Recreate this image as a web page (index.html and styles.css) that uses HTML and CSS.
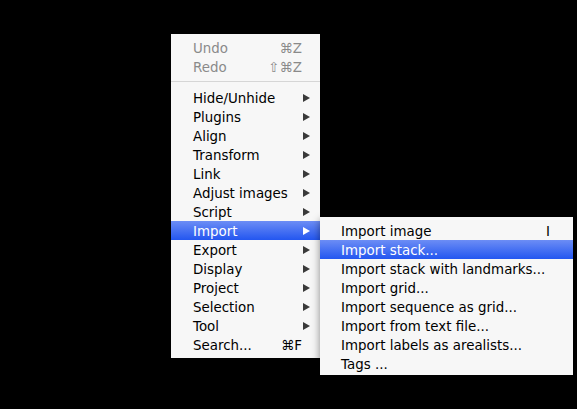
FILE: index.html
```html
<!DOCTYPE html>
<html lang="en">
<head>
  <meta charset="UTF-8" />
  <title>Menu</title>
  <link rel="stylesheet" href="styles.css">
</head>
<body>
  <div class="stage">
    <ul class="menu main">
      <li class="item off"><span class="label">Undo</span><span class="key">⌘Z</span></li>
      <li class="item off"><span class="label">Redo</span><span class="key">⇧⌘Z</span></li>
      <li class="sep"></li>
      <li class="item"><span class="label">Hide/Unhide</span><span class="arrow"></span></li>
      <li class="item"><span class="label">Plugins</span><span class="arrow"></span></li>
      <li class="item"><span class="label">Align</span><span class="arrow"></span></li>
      <li class="item"><span class="label">Transform</span><span class="arrow"></span></li>
      <li class="item"><span class="label">Link</span><span class="arrow"></span></li>
      <li class="item"><span class="label">Adjust images</span><span class="arrow"></span></li>
      <li class="item"><span class="label">Script</span><span class="arrow"></span></li>
      <li class="item active open"><span class="label">Import</span><span class="arrow"></span>
        <ul class="menu sub">
          <li class="item"><span class="label">Import image</span><span class="key">I</span></li>
          <li class="item active"><span class="label">Import stack...</span></li>
          <li class="item"><span class="label">Import stack with landmarks...</span></li>
          <li class="item"><span class="label">Import grid...</span></li>
          <li class="item"><span class="label">Import sequence as grid...</span></li>
          <li class="item"><span class="label">Import from text file...</span></li>
          <li class="item"><span class="label">Import labels as arealists...</span></li>
          <li class="item"><span class="label">Tags ...</span></li>
        </ul>
      </li>
      <li class="item"><span class="label">Export</span><span class="arrow"></span></li>
      <li class="item"><span class="label">Display</span><span class="arrow"></span></li>
      <li class="item"><span class="label">Project</span><span class="arrow"></span></li>
      <li class="item"><span class="label">Selection</span><span class="arrow"></span></li>
      <li class="item"><span class="label">Tool</span><span class="arrow"></span></li>
      <li class="item"><span class="label">Search...</span><span class="key">⌘F</span></li>
    </ul>
  </div>
</body>
</html>
```
FILE: styles.css
```css
body {
  margin: 0;
  background: #000;
  font-family: "DejaVu Sans", Verdana, sans-serif;
  font-size: 13.4px;
  color: #000;
}
.stage {
  padding: 34px 0 0 171px;
  height: 375px;
  box-sizing: border-box;
}
.menu {
  list-style: none;
  margin: 0;
  padding: 4px 0;
  background: #f7f7f7;
}
.main {
  width: 149px;
}
.sub {
  position: absolute;
  left: 100%;
  top: -4px;
  width: 253px;
  box-shadow: 0 3px 8px rgba(0,0,0,0.45);
  z-index: 2;
}
.item {
  position: relative;
  display: flex;
  align-items: center;
  height: 19px;
  padding: 1px 10px 0 22px;
  box-sizing: border-box;
  white-space: nowrap;
}
.sub .item {
  padding-left: 21px;
}
.label {
  flex: 1;
}
.key {
  margin-right: 8px;
}
.sub .key {
  margin-right: 13px;
}
.off {
  color: #8a8a8a;
}
.arrow {
  width: 0;
  height: 0;
  margin-top: -1px;
  border-left: 7px solid #3a3a3a;
  border-top: 4px solid transparent;
  border-bottom: 4px solid transparent;
}
.active {
  background: linear-gradient(#6c8df5, #2356f0);
  color: #fff;
}
.active .arrow {
  border-left-color: #fff;
}
.open .sub .item {
  color: #000;
  background: none;
}
.open .sub .item.active {
  background: linear-gradient(#6c8df5, #2356f0);
  color: #fff;
}
.sep {
  height: 1px;
  background: #d6d6d6;
  margin: 5px 0 6px;
}
```
